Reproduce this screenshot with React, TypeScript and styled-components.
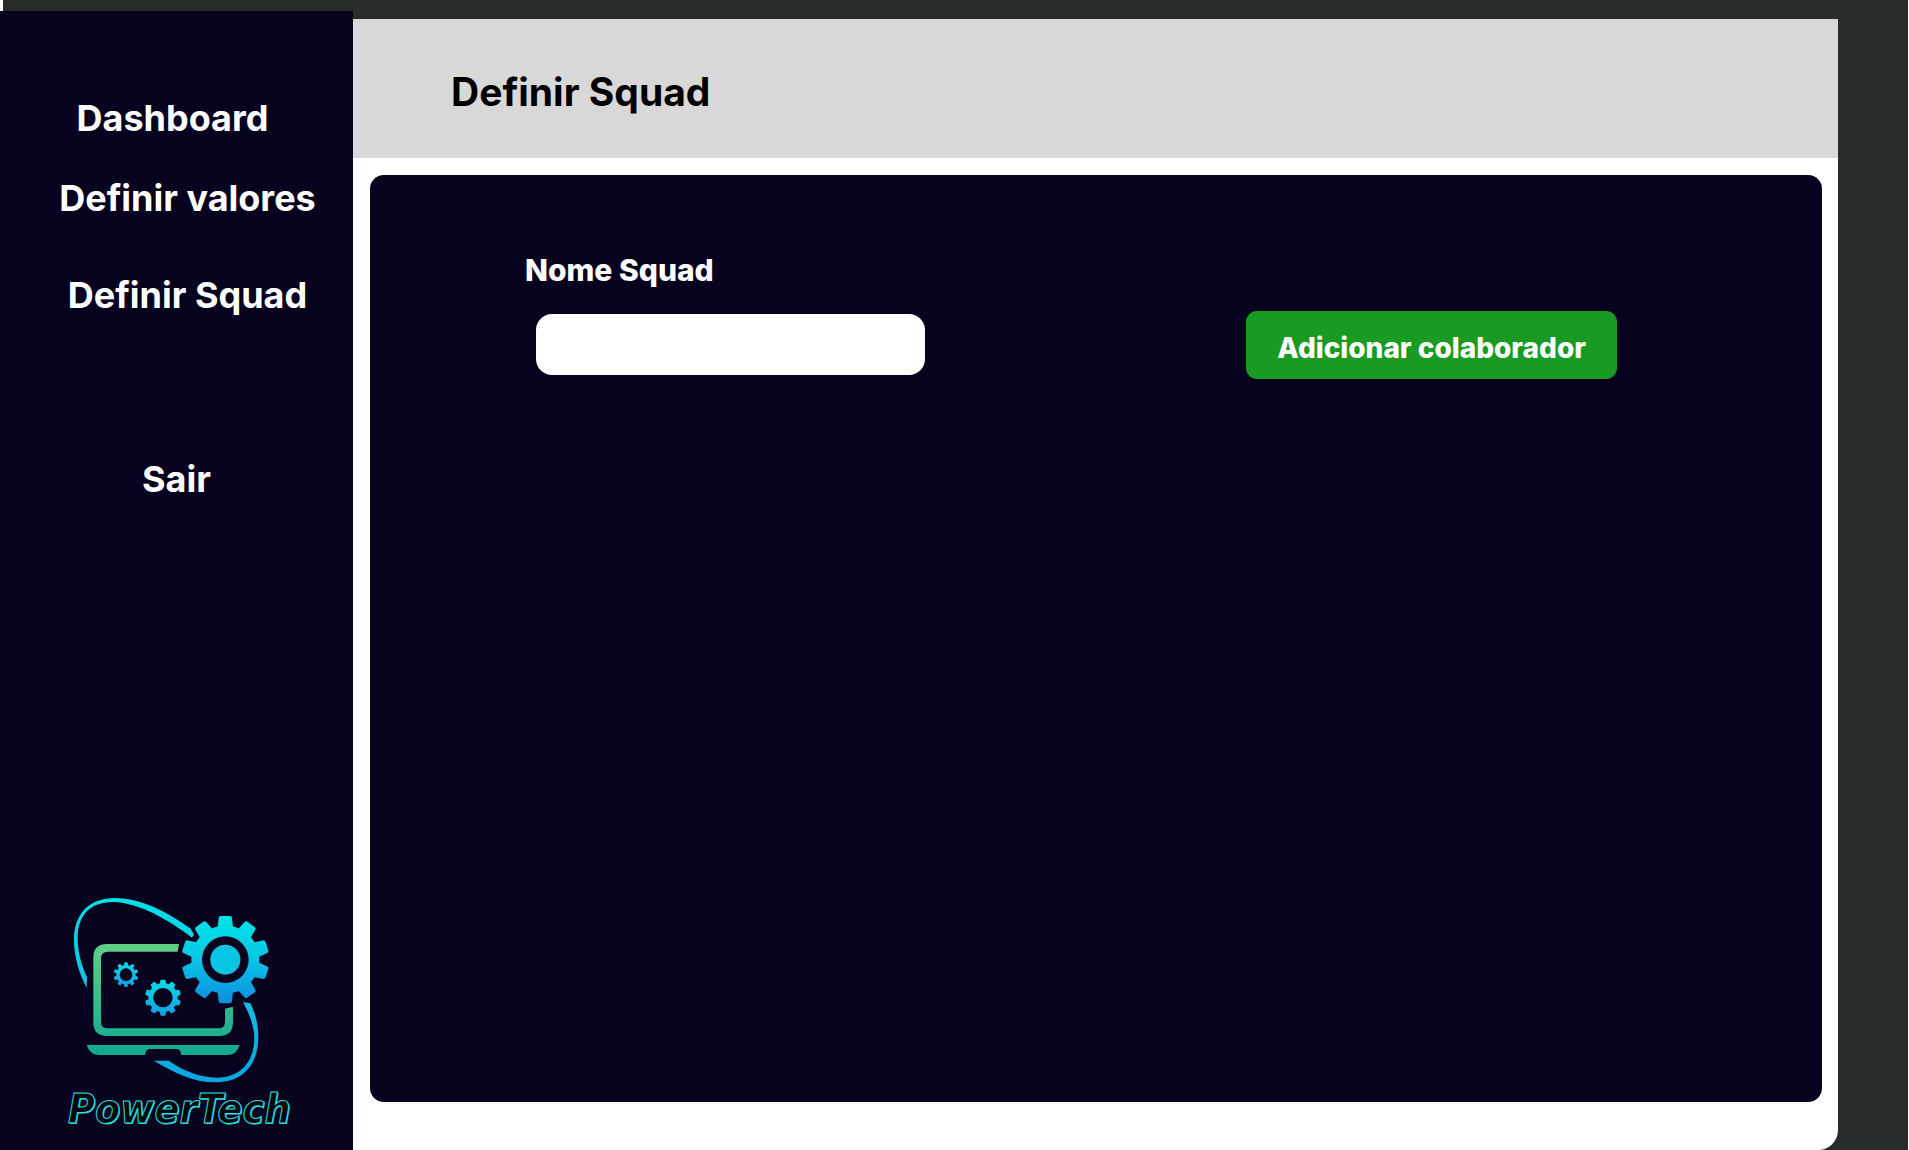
import React from "react";
import styled, { createGlobalStyle } from "styled-components";

const navy = "#07031e";

const GlobalStyle = createGlobalStyle`
  * { box-sizing: border-box; }
  body {
    margin: 0;
    background: #272c29;
    font-family: Inter, "Liberation Sans", sans-serif;
    font-weight: 700;
  }
`;

const Page = styled.div`
  display: flex;
  align-items: stretch;
  min-height: 100vh;
  padding-right: 70px;
  border-right: 1px solid #fff;
`;

const SideColumn = styled.div`
  display: flex;
  flex-direction: column;
  flex: 0 0 353px;
`;

const CornerMark = styled.div`
  width: 3px;
  height: 11px;
  background: #fff;
`;

const Sidebar = styled.aside`
  display: flex;
  flex: 1;
  flex-direction: column;
  justify-content: space-between;
  padding: 85px 0 17px;
  background: ${navy};
`;

const NavList = styled.ul`
  display: flex;
  flex-direction: column;
  margin: 0;
  padding: 0;
  list-style: none;
`;

const NavItem = styled.li<{ $before?: number; $left?: number; $right?: number }>`
  margin-top: ${(p) => p.$before ?? 0}px;
  padding-left: ${(p) => p.$left ?? 0}px;
  padding-right: ${(p) => p.$right ?? 0}px;
  text-align: center;
`;

const NavLink = styled.a`
  color: #fff;
  font-size: 36px;
  line-height: 44px;
  text-decoration: none;
  white-space: nowrap;
`;

const Brand = styled.div`
  display: flex;
  flex-direction: column;
  padding-left: 68px;
`;

const BrandDrawing = styled.svg`
  display: block;
  width: 206px;
  height: 190px;
`;

const Wordmark = styled.span`
  color: #020908;
  font-family: "DejaVu Sans Condensed", "DejaVu Sans", sans-serif;
  font-size: 41px;
  font-stretch: condensed;
  font-style: italic;
  font-weight: 700;
  line-height: 48px;
  -webkit-text-stroke: 1px #2adfe6;
  text-shadow: 1px 1px 0 #2adfe6;
`;

const Main = styled.main`
  display: flex;
  flex: 1;
  flex-direction: column;
  min-width: 0;
  margin-top: 19px;
  background: #fff;
  border-radius: 0 0 20px 0;
`;

const Header = styled.header`
  padding: 49px 98px 42px;
  background: #d8d8d8;
`;

const Title = styled.h1`
  margin: 0;
  color: #000;
  font-size: 39px;
  font-weight: 700;
  line-height: 48px;
`;

const Panel = styled.section`
  flex: 1;
  margin: 17px 16px 48px 17px;
  padding: 76px 205px 76px 155px;
  background: ${navy};
  border-radius: 14px;
`;

const SquadForm = styled.form`
  display: flex;
  align-items: flex-end;
  justify-content: space-between;
  gap: 24px;
`;

const Field = styled.div`
  display: flex;
  flex-direction: column;
  gap: 25px;
  padding-bottom: 4px;
`;

const Label = styled.label`
  color: #fff;
  font-size: 30px;
  font-weight: 800;
  line-height: 38px;
`;

const TextInput = styled.input`
  width: 389px;
  height: 61px;
  margin-left: 11px;
  padding: 0 16px;
  border: 0;
  border-radius: 16px;
  background: #fff;
  color: ${navy};
  font: 500 24px Inter, sans-serif;
`;

const AddButton = styled.button`
  height: 68px;
  padding: 6px 31px 0;
  border: 0;
  border-radius: 11px;
  background: #199a23;
  color: #fff;
  font-family: inherit;
  font-size: 28px;
  font-weight: 800;
  line-height: 36px;
  white-space: nowrap;
  cursor: pointer;
`;

type GearProps = {
  cx: number;
  cy: number;
  outer: number;
  body: number;
  hole: number;
  tooth: number;
  fill: string;
};

/* One closed outline with ten teeth and a round hole, so a gradient runs across the whole gear. */
function gearPath({ cx, cy, outer, body, hole, tooth }: Omit<GearProps, "fill">) {
  const round = tooth * 0.17;
  const base = tooth * 0.57;
  const low = -Math.sqrt(body * body - base * base);
  const at = (x: number, y: number, turn: number) => {
    const a = (turn * Math.PI) / 180;
    const px = cx + x * Math.cos(a) - y * Math.sin(a);
    const py = cy + x * Math.sin(a) + y * Math.cos(a);
    return `${px.toFixed(1)} ${py.toFixed(1)}`;
  };
  const half = tooth / 2;
  let d = "";
  for (let i = 0; i < 10; i += 1) {
    const t = i * 36;
    d += i === 0 ? `M${at(-base, low, t)}` : `A${body} ${body} 0 0 1 ${at(-base, low, t)}`;
    d += `L${at(-half, -outer + round, t)}Q${at(-half, -outer, t)} ${at(-half + round, -outer, t)}`;
    d += `L${at(half - round, -outer, t)}Q${at(half, -outer, t)} ${at(half, -outer + round, t)}`;
    d += `L${at(base, low, t)}`;
  }
  d += `A${body} ${body} 0 0 1 ${at(-base, low, 0)}Z`;
  d += `M${cx - hole} ${cy}a${hole} ${hole} 0 1 0 ${hole * 2} 0a${hole} ${hole} 0 1 0 ${-hole * 2} 0Z`;
  return d;
}

function Gear({ fill, ...shape }: GearProps) {
  return <path d={gearPath(shape)} fill={fill} fillRule="evenodd" />;
}

function LogoDrawing() {
  return (
    <BrandDrawing viewBox="54 45 618 570" aria-hidden="true">
      <defs>
        <linearGradient id="laptop" gradientUnits="userSpaceOnUse" x1="0" y1="192" x2="0" y2="525">
          <stop offset="0" stopColor="#62cf87" />
          <stop offset="1" stopColor="#0fa992" />
        </linearGradient>
        <linearGradient id="gear" x1="0" y1="0" x2="0" y2="1">
          <stop offset="0" stopColor="#00e5e8" />
          <stop offset="0.45" stopColor="#08c9e6" />
          <stop offset="1" stopColor="#0b8fe0" />
        </linearGradient>
        <linearGradient id="gearSmall" x1="0" y1="0" x2="0" y2="1">
          <stop offset="0" stopColor="#0cdbe4" />
          <stop offset="1" stopColor="#0f9fe2" />
        </linearGradient>
        <linearGradient id="orbit" gradientUnits="userSpaceOnUse" x1="0" y1="54" x2="0" y2="607">
          <stop offset="0" stopColor="#00e2e6" />
          <stop offset="0.5" stopColor="#16bde3" />
          <stop offset="1" stopColor="#08a6e2" />
        </linearGradient>
      </defs>
      <path
        d="M110 323 C88 282 72 232 72 180 C72 103 116 54 195 54 C275 54 354 98 421 145 L432 163 L426 173 C356 120 271 69 190 66 C119 66 84 107 83 172 C83 216 94 256 111 291 Z"
        fill="url(#orbit)"
      />
      <path
        d="M579 366 L601 370 C619 405 625 439 625 472 C625 556 576 607 496 607 C430 607 371 577 311 542 H356 C403 574 452 593 505 593 C572 590 611 547 613 477 C613 439 600 406 579 366 Z"
        fill="url(#orbit)"
      />
      <path
        d="M387 192 H171 Q130 192 130 233 V427 Q130 468 171 468 H508 Q549 468 549 427 V380 L525 386 V425 Q525 445 505 445 H174 Q153 445 153 425 V236 Q153 215 174 215 H383 Z"
        fill="url(#laptop)"
      />
      <path
        d="M110 495 H569 Q560 525 531 525 H393 V520 Q391 507 378 507 H302 Q288 507 286 520 V525 H149 Q119 525 110 495 Z"
        fill="url(#laptop)"
      />
      <Gear cx={526} cy={239} outer={131} body={102} hole={70} tooth={40} fill="url(#gear)" />
      <circle cx="526" cy="239" r="45" fill="#09c5e4" />
      <Gear cx={228} cy={284} outer={37} body={29} hole={19} tooth={10} fill="url(#gearSmall)" />
      <Gear cx={339} cy={353} outer={54} body={44} hole={29} tooth={16} fill="url(#gearSmall)" />
    </BrandDrawing>
  );
}

export default function App() {
  return (
    <>
      <GlobalStyle />
      <Page>
        <SideColumn>
          <CornerMark />
          <Sidebar>
            <nav>
              <NavList>
                <NavItem $right={8}>
                  <NavLink href="#dashboard">Dashboard</NavLink>
                </NavItem>
                <NavItem $before={36} $left={22}>
                  <NavLink href="#valores">Definir valores</NavLink>
                </NavItem>
                <NavItem $before={53} $left={22}>
                  <NavLink href="#squad">Definir Squad</NavLink>
                </NavItem>
                <NavItem $before={140}>
                  <NavLink href="#sair">Sair</NavLink>
                </NavItem>
              </NavList>
            </nav>
            <Brand>
              <LogoDrawing />
              <Wordmark>PowerTech</Wordmark>
            </Brand>
          </Sidebar>
        </SideColumn>
        <Main>
          <Header>
            <Title>Definir Squad</Title>
          </Header>
          <Panel>
            <SquadForm onSubmit={(e) => e.preventDefault()}>
              <Field>
                <Label htmlFor="squad-name">Nome Squad</Label>
                <TextInput id="squad-name" type="text" />
              </Field>
              <AddButton type="button">Adicionar colaborador</AddButton>
            </SquadForm>
          </Panel>
        </Main>
      </Page>
    </>
  );
}
